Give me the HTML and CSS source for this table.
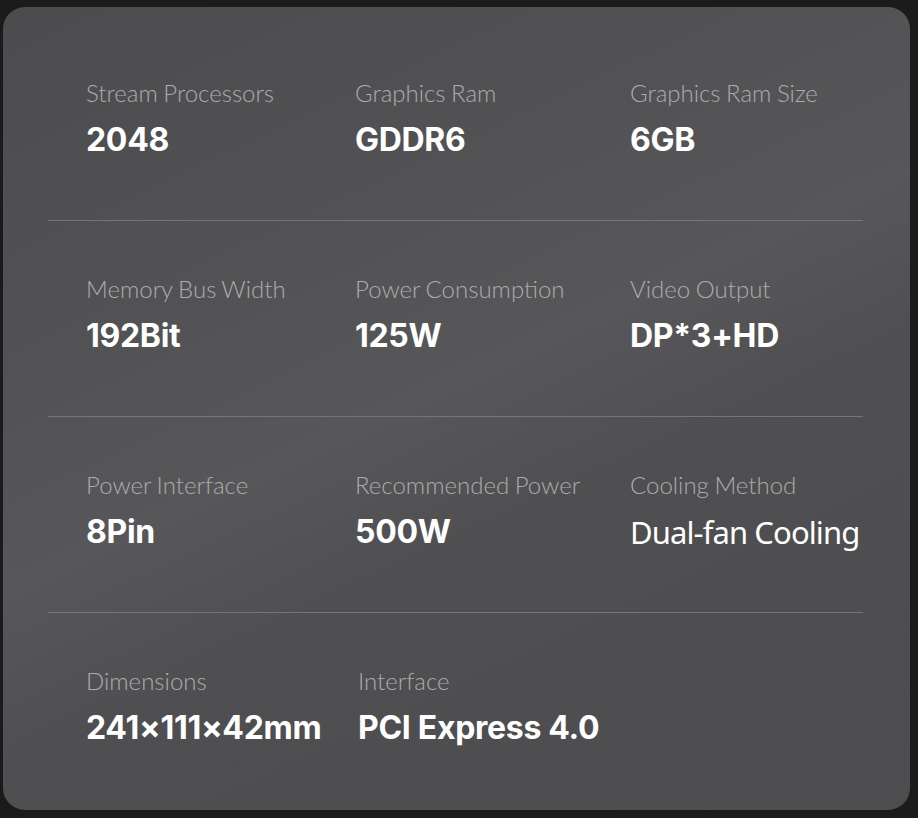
FILE: index.html
```html
<!DOCTYPE html>
<html lang="en">
<head>
<meta charset="utf-8">
<title>Specifications</title>
<link rel="stylesheet" href="styles.css">
</head>
<body>
<div class="card">
  <div class="row">
    <div class="spec"><div class="label">Stream Processors</div><div class="value">2048</div></div>
    <div class="spec"><div class="label">Graphics Ram</div><div class="value">GDDR6</div></div>
    <div class="spec"><div class="label">Graphics Ram Size</div><div class="value">6GB</div></div>
  </div>
  <div class="row">
    <div class="spec"><div class="label">Memory Bus Width</div><div class="value">192Bit</div></div>
    <div class="spec"><div class="label">Power Consumption</div><div class="value">125W</div></div>
    <div class="spec"><div class="label">Video Output</div><div class="value">DP*3+HD</div></div>
  </div>
  <div class="row">
    <div class="spec"><div class="label">Power Interface</div><div class="value">8Pin</div></div>
    <div class="spec"><div class="label">Recommended Power</div><div class="value">500W</div></div>
    <div class="spec"><div class="label">Cooling Method</div><div class="value value-light">Dual-fan Cooling</div></div>
  </div>
  <div class="row row-last">
    <div class="spec"><div class="label">Dimensions</div><div class="value">241×111×42mm</div></div>
    <div class="spec spec-shift"><div class="label">Interface</div><div class="value">PCI Express 4.0</div></div>
  </div>
</div>
</body>
</html>
```

FILE: styles.css
```css
html, body {
  margin: 0;
  padding: 0;
  background: #1b1b1b;
}
body {
  width: 918px;
  height: 818px;
  padding: 7px 8px 8px 3px;
  box-sizing: border-box;
}
.card {
  height: 803px;
  border-radius: 22px;
  background: linear-gradient(155deg, #4c4c4e 0%, #525254 30%, #575759 48%, #4f4f51 62%, #4d4d4f 100%);
  padding: 18px 47px 0 45px;
  box-sizing: border-box;
}
.row {
  display: grid;
  grid-template-columns: 269px 275px 1fr;
  padding: 54px 0 60px 38px;
  border-bottom: 1px solid #767678;
}
.row-last {
  border-bottom: none;
}
.spec-shift {
  padding-left: 3px;
}
.label {
  font-family: Lato, "Liberation Sans", sans-serif;
  font-weight: 300;
  font-size: 24px;
  line-height: 28px;
  color: #acacac;
  white-space: nowrap;
  word-spacing: -1px;
}
.value {
  margin-top: 13px;
  font-family: Inter, "Liberation Sans", Arial, sans-serif;
  font-weight: 700;
  font-size: 32px;
  line-height: 40px;
  letter-spacing: -0.3px;
  color: #ffffff;
  white-space: nowrap;
}
.value-light {
  font-family: "Noto Sans", sans-serif;
  font-weight: 400;
  font-size: 31px;
  letter-spacing: -0.9px;
}
```
